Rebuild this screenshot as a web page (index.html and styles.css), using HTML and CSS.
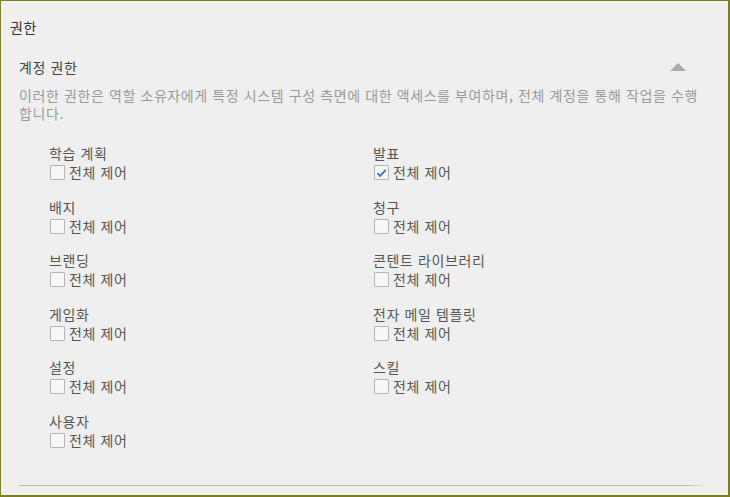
FILE: index.html
```html
<!DOCTYPE html>
<html lang="ko">
<head>
<meta charset="UTF-8">
<title>권한</title>
<link rel="stylesheet" href="styles.css">
</head>
<body>
    <div class="panel">
        <div class="panel-title">권한</div>

        <div class="section">
            <div class="section-head">
                <span class="section-name">계정 권한</span>
                <span class="toggle"></span>
            </div>
            <p class="desc">이러한 권한은 역할 소유자에게 특정 시스템 구성 측면에 대한 액세스를 부여하며, 전체 계정을 통해 작업을 수행합니다.</p>

            <div class="perm-grid">
                <div class="perm">
                    <div class="perm-name">학습 계획</div>
                    <label class="check"><span class="box"></span>전체 제어</label>
                </div>
                <div class="perm">
                    <div class="perm-name">발표</div>
                    <label class="check"><span class="box checked">
                        <svg viewBox="0 0 14 14" width="14" height="14"><path d="M2.5 7.2 L5.6 10.2 L11.6 3.6" fill="none" stroke="#3d72b8" stroke-width="2"/></svg>
                    </span>전체 제어</label>
                </div>
                <div class="perm">
                    <div class="perm-name">배지</div>
                    <label class="check"><span class="box"></span>전체 제어</label>
                </div>
                <div class="perm">
                    <div class="perm-name">청구</div>
                    <label class="check"><span class="box"></span>전체 제어</label>
                </div>
                <div class="perm">
                    <div class="perm-name">브랜딩</div>
                    <label class="check"><span class="box"></span>전체 제어</label>
                </div>
                <div class="perm">
                    <div class="perm-name">콘텐트 라이브러리</div>
                    <label class="check"><span class="box"></span>전체 제어</label>
                </div>
                <div class="perm">
                    <div class="perm-name">게임화</div>
                    <label class="check"><span class="box"></span>전체 제어</label>
                </div>
                <div class="perm">
                    <div class="perm-name">전자 메일 템플릿</div>
                    <label class="check"><span class="box"></span>전체 제어</label>
                </div>
                <div class="perm">
                    <div class="perm-name">설정</div>
                    <label class="check"><span class="box"></span>전체 제어</label>
                </div>
                <div class="perm">
                    <div class="perm-name">스킬</div>
                    <label class="check"><span class="box"></span>전체 제어</label>
                </div>
                <div class="perm">
                    <div class="perm-name">사용자</div>
                    <label class="check"><span class="box"></span>전체 제어</label>
                </div>
            </div>

            <div class="divider"></div>
        </div>
    </div>
</body>
</html>
```

FILE: styles.css
```css
html, body {
    margin: 0;
    padding: 0;
}
body {
    font-family: "Noto Sans CJK KR", "Noto Sans", sans-serif;
    font-size: 14px;
    letter-spacing: 0.6px;
    color: #444;
    background-color: #efefef;
}

/* 바깥 테두리 */
.panel {
    box-sizing: border-box;
    height: 497px;
    border: solid #7f7f1c;
    border-width: 1px 2px 2px 1px;
    background-color: #efefef;
    padding: 16px 0 0 9px;
}
.panel-title {
    line-height: 20px;
    color: #333;
}

.section {
    padding: 20px 20px 0 9px;
}
.section-head {
    display: flex;
    justify-content: space-between;
    align-items: center;
    line-height: 20px;
}
.section-name {
    color: #444;
}
.toggle {
    width: 0;
    height: 0;
    border-left: 8px solid transparent;
    border-right: 8px solid transparent;
    border-bottom: 8px solid #aaa;
    margin-right: 22px;
}
.desc {
    margin: 9px 0 0;
    color: #9a9a9a;
    line-height: 18px;
}

/* 권한 목록 */
.perm-grid {
    display: grid;
    grid-template-columns: 324px 1fr;
    row-gap: 15.6px;
    padding: 22px 0 0 30px;
}
.perm-name {
    line-height: 19px;
    color: #555;
}
.check {
    display: flex;
    align-items: center;
    line-height: 19px;
    color: #555;
}
.box {
    box-sizing: border-box;
    width: 15px;
    height: 15px;
    border: 1px solid #b5b5b5;
    border-radius: 1px;
    background-color: #f7f7f7;
    margin: 0 4px 0 1px;
    display: flex;
    align-items: center;
    justify-content: center;
}
.box svg {
    display: block;
}

.divider {
    height: 1px;
    background: linear-gradient(to right, #bcbcbc 97%, rgba(188,188,188,0));
    margin-top: 35px;
}
```
